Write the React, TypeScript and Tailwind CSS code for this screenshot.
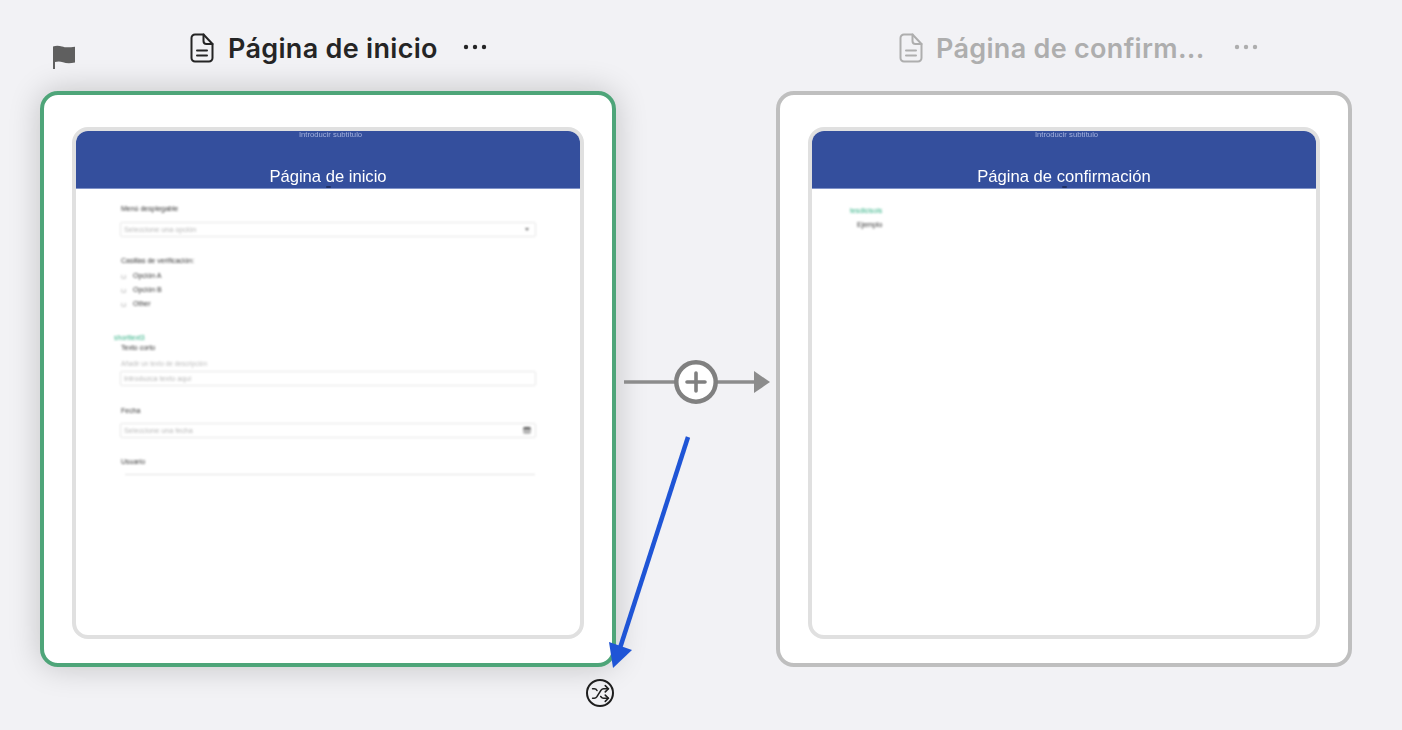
import { Shuffle } from "lucide-react";

const sans = "font-['Liberation_Sans',Arial,sans-serif]";

function DocIcon({ className }: { className: string }) {
  return (
    <svg viewBox="0 0 24 30" fill="none" stroke="currentColor" strokeWidth="2" strokeLinejoin="round" strokeLinecap="round" className={className}>
      <path d="M5 1.500h8.500L22.500 11v14a3.500 3.500 0 0 1-3.500 3.500H5A3.500 3.500 0 0 1 1.500 25V5A3.500 3.500 0 0 1 5 1.500z" />
      <path d="M13.500 1.500V8a3 3 0 0 0 3 3h6" />
      <path d="M7 17.500h10M7 22.500h10" />
    </svg>
  );
}

function Dots({ className }: { className: string }) {
  return (
    <svg viewBox="0 0 24 6" fill="currentColor" className={className}>
      <circle cx="3" cy="3" r="2.200" />
      <circle cx="12" cy="3" r="2.200" />
      <circle cx="21" cy="3" r="2.200" />
    </svg>
  );
}

function FakeInput({ placeholder, icon }: { placeholder?: string; icon?: React.ReactNode }) {
  return (
    <div className="-ml-[1px] flex h-[15px] w-[416px] items-center justify-between rounded-[2px] border border-[#e6e6e6] pl-[3px] pr-[4px]">
      <span className="text-[7.2px] text-[#b8b8b8]">{placeholder}</span>
      {icon}
    </div>
  );
}

function Thumbnail({ title, children }: { title: string; children?: React.ReactNode }) {
  return (
    <div className="h-[512px] w-[512px] overflow-hidden rounded-[16px] border-4 border-[#e0e0e0] bg-white">
      <div className={`${sans} h-full`}>
        <div className="relative flex h-[58px] flex-col items-center overflow-hidden bg-[#344f9d]">
          <span className="ml-[5px] text-[7.7px] leading-[7px] text-[#a3b1dd] blur-[0.6px]">Introducir subtítulo</span>
          <span className="mt-[30px] text-[16.6px] leading-[18px] text-white blur-[0.5px]">{title}</span>
          <span className="absolute bottom-0 h-[1px] w-full bg-[#8093c8]" />
          <span className="absolute bottom-[1px] h-[2px] w-[5px] rounded-full bg-[#1f2f66] blur-[0.5px]" />
        </div>
        <div className="blur-[0.8px]">{children}</div>
      </div>
    </div>
  );
}

function FormBody() {
  return (
    <div className="flex flex-col pl-[45px] text-[7px] leading-[8px] text-[#333333]">
      <span className="mt-[16px]">Menú desplegable</span>
      <div className="mt-[9px]">
        <FakeInput
          placeholder="Seleccione una opción"
          icon={<span className="mr-[2px] h-0 w-0 border-x-[2px] border-t-[3px] border-x-transparent border-t-[#777777]" />}
        />
      </div>
      <span className="mt-[20px]">Casillas de verificación:</span>
      <div className="mt-[7px] flex flex-col gap-[6px]">
        {["Opción A", "Opción B", "Other"].map((label) => (
          <div key={label} className="flex items-center gap-[7px]">
            <span className="h-[5px] w-[5px] rounded-full border border-[#c8c8c8] border-t-transparent" />
            <span>{label}</span>
          </div>
        ))}
      </div>
      <span className="-ml-[7px] mt-[26px] text-[#2fb083]">shorttext3</span>
      <span className="mt-[2px]">Texto corto</span>
      <span className="mt-[8px] text-[6.4px] text-[#bcbcbc]">Añadir un texto de descripción</span>
      <div className="mt-[3px]">
        <FakeInput placeholder="Introduzca texto aquí" />
      </div>
      <span className="mt-[21px]">Fecha</span>
      <div className="mt-[8px]">
        <FakeInput
          placeholder="Seleccione una fecha"
          icon={<span className="h-[7px] w-[8px] rounded-[2px] border-t-2 border-[#555555] bg-[#b5b5b5]" />}
        />
      </div>
      <span className="mt-[20px]">Usuario</span>
      <div className="ml-[4px] mt-[8px] h-[1px] w-[410px] bg-[#e0e0e0]" />
    </div>
  );
}

function ConfirmBody() {
  return (
    <div className="flex flex-col pl-[38px] text-[7px] leading-[8px]">
      <span className="mt-[18px] text-[#2fb083]">tesdlcisols</span>
      <span className="ml-[7px] mt-[6px] text-[#333333]">Ejemplo</span>
    </div>
  );
}

export default function App() {
  return (
    <div className="relative h-[730px] w-[1402px] overflow-hidden bg-[#f2f2f5] font-['Inter',sans-serif]">
      <div className="flex gap-[160px] pl-[40px]">
        <div className="flex w-[576px] flex-col">
          <div className="flex h-[91px] items-start pl-[150px] pt-[33px] text-[#252525]">
            <DocIcon className="h-[30px] w-[24px]" />
            <span className="ml-[14px] text-[27px] font-semibold leading-[31px] tracking-[0.3px]">Página de inicio</span>
            <Dots className="ml-[25px] mt-[11px] h-[6px] w-[24px]" />
          </div>
          <div className="flex h-[576px] items-start justify-center rounded-[18px] border-4 border-[#4ea579] bg-white pt-[32px] shadow-[0_0_32px_rgba(0,0,0,0.2)]">
            <Thumbnail title="Página de inicio">
              <FormBody />
            </Thumbnail>
          </div>
        </div>
        <div className="flex w-[576px] flex-col">
          <div className="flex h-[91px] items-start pl-[123px] pt-[33px] text-[#aeaeae]">
            <DocIcon className="h-[30px] w-[24px]" />
            <span className="ml-[13px] text-[27px] font-semibold leading-[31px] tracking-[0.3px]">Página de confirm...</span>
            <Dots className="ml-[29px] mt-[11px] h-[6px] w-[24px]" />
          </div>
          <div className="flex h-[576px] items-start justify-center rounded-[18px] border-4 border-[#bfbfbf] bg-white pt-[32px]">
            <Thumbnail title="Página de confirmación">
              <ConfirmBody />
            </Thumbnail>
          </div>
        </div>
      </div>

      {/* start flag */}
      <svg viewBox="0 0 24 24" className="absolute left-[52px] top-[45px] h-[24px] w-[24px] text-[#5f5f5f]" fill="currentColor">
        <path d="M1 1.500c3-1.200 6-1 9 0s6.500 1.200 13 .2v15.800c-5 1-9 .8-12-.2s-5.500-.9-8-.2V24H1z" />
      </svg>

      {/* connector with add button */}
      <svg viewBox="0 0 150 50" className="absolute left-[622px] top-[357px] h-[50px] w-[150px]">
        <path d="M2 25h132" stroke="#8c8c8c" strokeWidth="3.700" />
        <path d="M132 14l16 11-16 11z" fill="#8c8c8c" />
        <circle cx="74" cy="25" r="19.700" fill="#ffffff" stroke="#808080" strokeWidth="4.500" />
        <path d="M74 16v18M65 25h18" stroke="#808080" strokeWidth="3.600" strokeLinecap="round" />
      </svg>

      {/* blue fallback arrow */}
      <svg viewBox="0 0 100 250" className="absolute left-[600px] top-[430px] h-[250px] w-[100px]">
        <path d="M88 7L20 218" stroke="#1f55d6" strokeWidth="4.500" />
        <path d="M9 212l23 8-19 18z" fill="#1f55d6" />
      </svg>

      <div className="absolute left-[586px] top-[679px] flex h-[28px] w-[28px] items-center justify-center rounded-full border-2 border-[#1e1e1e] text-[#1e1e1e]">
        <Shuffle size={19} strokeWidth={2} />
      </div>
    </div>
  );
}
